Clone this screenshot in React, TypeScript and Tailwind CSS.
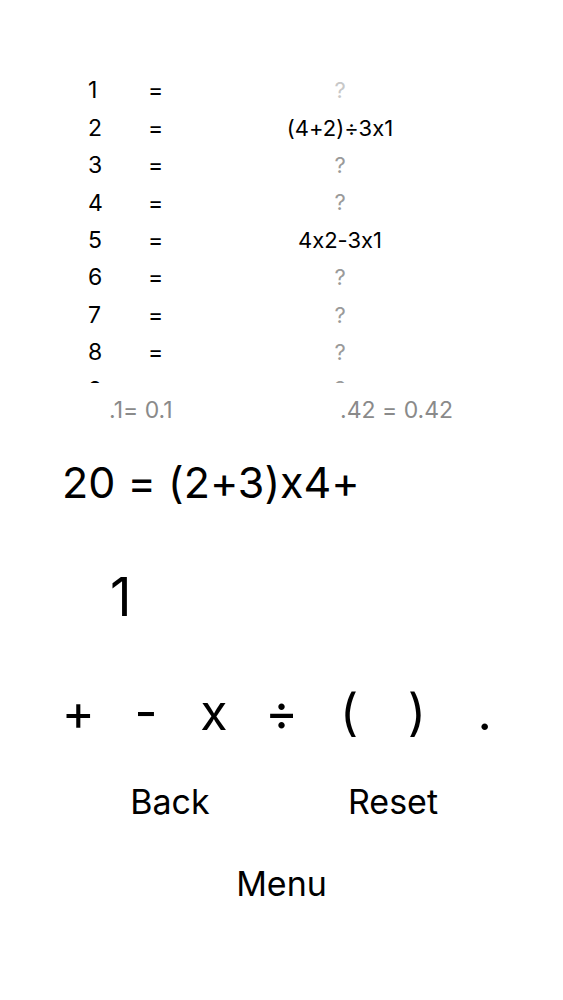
import React from "react";

const solutions: Record<number, string> = {
  2: "(4+2)÷3x1",
  5: "4x2-3x1",
};

const operators = ["+", "-", "x", "÷", "(", ")", "."];

export default function App() {
  const rows = Array.from({ length: 10 }, (_, i) => i + 1);

  return (
    <main
      className="min-h-screen w-full bg-white text-black [font-feature-settings:'calt'_0]"
      style={{ fontFamily: "Inter, 'Liberation Sans', sans-serif" }}
    >
      {/* Results list */}
      <div className="h-[72px]" />
      <div className="h-[311px] overflow-hidden">
        {rows.map((n) => {
          const expr = solutions[n];
          return (
            <div key={n} className="flex h-[37.4px] items-center pl-[88px]">
              <span className="w-[60px] text-[23px]">{n}</span>
              <span className="w-[16px] text-[23px]">=</span>
              <span
                className={
                  expr
                    ? "w-[352px] text-center text-[22px] text-black"
                    : n === 1
                      ? "w-[352px] text-center text-[22px] text-[#c8c8c8]"
                      : "w-[352px] text-center text-[22px] text-[#9a9a9a]"
                }
              >
                {expr ?? "?"}
              </span>
            </div>
          );
        })}
      </div>

      {/* Hints */}
      <div className="flex h-[54px] items-center text-[23px] text-[#8a8a8a]">
        <span className="w-[340px] pl-[109px]">.1= 0.1</span>
        <span>.42 = 0.42</span>
      </div>

      {/* Current equation */}
      <div className="flex h-[90px] items-center pl-[62px] text-[43px]">20 = (2+3)x4+</div>

      {/* Numbers */}
      <div className="flex h-[140px] items-center pl-[110px] text-[53px]">
        <button className="leading-none">1</button>
      </div>

      {/* Operators */}
      <div className="mx-auto grid h-[90px] w-[474px] grid-cols-7 items-center text-[50px] leading-none">
        {operators.map((op) => (
          <button key={op} className="flex h-[60px] items-center justify-center">
            {op}
          </button>
        ))}
      </div>

      {/* Back / Reset */}
      <div className="mx-auto grid h-[88px] w-[446px] grid-cols-2 items-center text-[34px]">
        <button className="flex h-[60px] items-center justify-center">Back</button>
        <button className="flex h-[60px] items-center justify-center">Reset</button>
      </div>

      {/* Menu */}
      <div className="flex h-[76px] items-center justify-center text-[34px]">
        <button className="h-[60px]">Menu</button>
      </div>
    </main>
  );
}
